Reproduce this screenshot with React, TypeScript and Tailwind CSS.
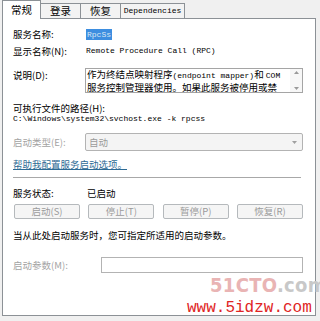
import React from "react";

const cjk = '"Noto Sans CJK SC", "Liberation Sans", sans-serif';
const mono = '"Liberation Mono", "Noto Sans CJK SC", monospace';

function Tab({ label, selected, width, isMono }: { label: string; selected?: boolean; width: number; isMono?: boolean }) {
  return (
    <div
      className={
        selected
          ? "relative z-10 -mb-px flex h-[19px] items-center justify-center border border-b-0 border-[#8c9196] bg-white text-black"
          : "-ml-px flex h-[15px] items-center justify-center border border-b-0 border-[#8c9196] bg-[#f3f3f3] text-black"
      }
      style={{ width, fontFamily: isMono ? mono : cjk, fontSize: isMono ? 8 : 10.5 }}
    >
      {label}
    </div>
  );
}

function Btn({ label }: { label: string }) {
  return (
    <div className="flex h-[15px] w-[66px] items-center justify-center rounded-[2px] border border-[#b5b9bc] bg-[#f5f5f5] leading-none text-[#9b9b9b]">
      {label}
    </div>
  );
}

export default function App() {
  return (
    <div className="relative h-[321px] w-[320px] overflow-hidden bg-[#f0f0f0]" style={{ fontFamily: cjk }}>
      {/* tabs */}
      <div className="flex h-[18px] items-end pl-[2px]">
        <Tab label="常规" selected width={39} />
        <Tab label="登录" width={41} />
        <Tab label="恢复" width={41} />
        <Tab label="Dependencies" width={65} isMono />
      </div>

      {/* panel */}
      <div className="ml-[2px] mr-[4px] flex h-[298px] flex-col border border-[#8c9196] bg-white pl-[10px] pr-[12px] text-[9.5px] leading-[12px] text-black">
        <div className="mt-[9px] flex h-[12px] items-center">
          <span className="w-[72px]">服务名称:</span>
          <span className="ml-[1px] bg-[#3d8ee0] px-[1px] text-[8px] leading-[11px] text-[#d8e6f3]" style={{ fontFamily: mono }}>
            RpcSs
          </span>
        </div>

        <div className="mt-[5px] flex h-[12px] items-center">
          <span className="w-[73px]">显示名称(N):</span>
          <span className="text-[8px]" style={{ fontFamily: mono }}>
            Remote Procedure Call (RPC)
          </span>
        </div>

        <div className="mt-[11px] flex h-[25px]">
          <span className="mt-[1px] w-[72px]">说明(D):</span>
          <div className="flex flex-1 border border-[#a5a5a5] bg-white">
            <div className="flex flex-1 flex-col whitespace-nowrap pl-[1px] leading-[11.5px]">
              <div>
                作为终结点映射程序<span className="text-[8px]" style={{ fontFamily: mono }}>(endpoint mapper)</span>和 <span className="text-[8px]" style={{ fontFamily: mono }}>COM</span>
              </div>
              <div>服务控制管理器使用。如果此服务被停用或禁</div>
            </div>
            <div className="flex w-[12px] flex-col items-center justify-between bg-[#f7f7f7] py-[2px]">
              <svg width="5" height="3" viewBox="0 0 5 3"><path d="M0 3 L2.5 0 L5 3 Z" fill="#9a9a9a" /></svg>
              <svg width="5" height="3" viewBox="0 0 5 3"><path d="M0 0 L2.5 3 L5 0 Z" fill="#9a9a9a" /></svg>
            </div>
          </div>
        </div>

        <div className="mt-[9px] h-[12px]">可执行文件的路径(H):</div>
        <div className="h-[10px] text-[8px] leading-[10px]" style={{ fontFamily: mono }}>
          C:\Windows\system32\svchost.exe -k rpcss
        </div>

        <div className="mt-[9px] flex h-[18px] items-center">
          <span className="w-[72px] text-[#a3a3a3]">启动类型(E):</span>
          <div className="flex h-[18px] flex-1 items-center justify-between rounded-[2px] border border-[#b3b3b3] bg-[#f4f4f4] pl-[3px] pr-[5px] text-[#9a9a9a]">
            <span>自动</span>
            <svg width="5" height="3" viewBox="0 0 5 3"><path d="M0 0 L2.5 3 L5 0 Z" fill="#a0a0a0" /></svg>
          </div>
        </div>

        <div className="mt-[7px] h-[12px] text-[#2d6a94] underline">帮助我配置服务启动选项。</div>

        <div className="mr-[2px] mt-[7px] h-[1px] bg-[#a8a8a8]" />

        <div className="mt-[9px] flex h-[12px] items-center">
          <span className="w-[74px]">服务状态:</span>
          <span>已启动</span>
        </div>

        <div className="ml-[1px] mt-[5px] flex justify-between">
          <Btn label="启动(S)" />
          <Btn label="停止(T)" />
          <Btn label="暂停(P)" />
          <Btn label="恢复(R)" />
        </div>

        <div className="mt-[10px] h-[12px]">当从此处启动服务时，您可指定所适用的启动参数。</div>

        <div className="mt-[16px] flex h-[16px] items-center">
          <span className="w-[88px] text-[#a3a3a3]">启动参数(M):</span>
          <div className="h-[16px] flex-1 border border-[#b3b3b3] bg-white" />
        </div>
      </div>

      {/* watermark overlays */}
      <div
        className="absolute left-[210px] top-[273px] whitespace-nowrap text-[20px] font-bold leading-[24px] tracking-[0.3px]"
        style={{ fontFamily: '"Liberation Sans Narrow", "DejaVu Sans Condensed", sans-serif' }}
      >
        <span className="text-[#e9b4b4]">51CTO</span>
        <span className="text-[#c8c8c8]">.com</span>
      </div>
      <div
        className="absolute left-[187px] top-[300px] whitespace-nowrap text-[16px] leading-[17px] text-[#e02424]"
        style={{ fontFamily: '"Liberation Mono", monospace' }}
      >
        www.5idzw.com
      </div>
    </div>
  );
}
